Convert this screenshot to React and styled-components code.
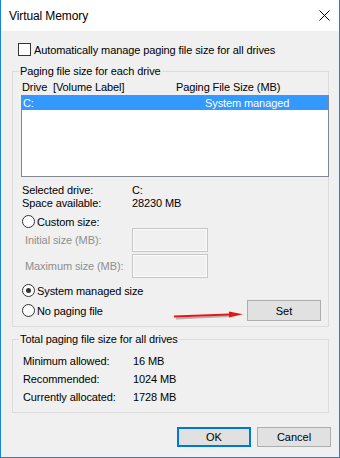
import React from 'react'
import styled, { createGlobalStyle } from 'styled-components'

const GlobalStyle = createGlobalStyle`
    body {
        margin: 0;
        background: #ffffff;
        font-family: 'Liberation Sans', Arial, sans-serif;
        font-size: 11px;
        letter-spacing: -0.1px;
        color: #000;
        white-space: nowrap;
    }
`

const Window = styled.div`
    width: 340px;
    height: 458px;
    box-sizing: border-box;
    border: 1px solid #1883d7;
    border-top: none;
    background: #f0f0f0;
    display: flex;
    flex-direction: column;
`

const TitleBar = styled.div`
    height: 31px;
    background: #ffffff;
    display: flex;
    align-items: center;
    justify-content: space-between;
    padding: 0 9px 0 8px;
    font-size: 12px;
`

const CheckRow = styled.label`
    display: flex;
    align-items: center;
    gap: 3px;
    height: 13px;
    margin-top: 12px;
    padding-left: 17px;
`

const CheckBox = styled.span`
    width: 13px;
    height: 13px;
    box-sizing: border-box;
    border: 1px solid #333;
    background: #fff;
`

const Group = styled.fieldset`
    margin: ${(p) => p.$top}px 10px 0 11px;
    padding: 0 0 ${(p) => p.$bottom}px;
    border: 1px solid #dcdcdc;
    min-width: 0;
    position: relative;
`

const Legend = styled.legend`
    margin-left: 6px;
    padding: 0 1px;
    line-height: 16px;
`

const ColumnHeader = styled.div`
    display: grid;
    grid-template-columns: 31px 123px auto;
    height: 16px;
    align-items: center;
    padding-left: 9px;
`

const ListBox = styled.div`
    margin-left: 8px;
    width: 308px;
    height: 82px;
    box-sizing: border-box;
    border: 1px solid #828790;
    background: #fff;
`

const ListRow = styled.div`
    display: grid;
    grid-template-columns: 182px auto;
    height: 14px;
    align-items: center;
    padding-left: 1px;
    background: ${(p) => (p.$selected ? '#3399ff' : 'transparent')};
    color: ${(p) => (p.$selected ? '#fff' : '#000')};
`

const InfoList = styled.div`
    margin-top: ${(p) => p.$top}px;
    padding-left: ${(p) => p.$left}px;
`

const InfoRow = styled.div`
    display: grid;
    grid-template-columns: ${(p) => p.$col}px auto;
    height: ${(p) => p.$h}px;
    align-items: center;
`

const RadioRow = styled.label`
    display: flex;
    align-items: center;
    gap: 2px;
    height: ${(p) => p.$h || 14}px;
    margin-top: ${(p) => p.$top || 0}px;
    padding-left: 9px;
`

const Radio = styled.span`
    width: 13px;
    height: 13px;
    box-sizing: border-box;
    border: 1px solid #333;
    border-radius: 50%;
    background: #fff;
    display: flex;
    align-items: center;
    justify-content: center;
    &::after {
        content: '';
        width: 5px;
        height: 5px;
        border-radius: 50%;
        background: ${(p) => (p.$checked ? '#333' : 'transparent')};
    }
`

const SizeRow = styled.div`
    display: grid;
    grid-template-columns: 107px 76px;
    height: 24px;
    align-items: center;
    padding-left: 12px;
    margin-top: ${(p) => p.$top || 0}px;
    color: #8e8e8e;
`

const SizeInput = styled.div`
    height: 24px;
    box-sizing: border-box;
    border: 1px solid #c6c6c6;
    box-shadow: inset 0 0 0 1px #fbfbfb;
    background: #f0f0f0;
`

const ActionRow = styled.div`
    display: flex;
    align-items: center;
    justify-content: space-between;
    margin-top: 3px;
    padding-right: 7px;
`

const Button = styled.button`
    width: 74px;
    height: ${(p) => p.$h || 20}px;
    box-sizing: border-box;
    padding: 0;
    border: ${(p) => (p.$default ? '2px solid #0078d7' : '1px solid #adadad')};
    background: #e1e1e1;
    font-family: inherit;
    font-size: 11px;
    color: #000;
`

const Footer = styled.div`
    display: flex;
    justify-content: flex-end;
    gap: 6px;
    margin-top: 14px;
    padding-right: 8px;
`

const Arrow = styled.svg`
    position: absolute;
    left: 146px;
    top: 229px;
`

const CloseIcon = () => (
    <svg width="11" height="11" viewBox="0 0 11 11">
        <path d="M0.5 0.5 L10.5 10.5 M10.5 0.5 L0.5 10.5" stroke="#000" strokeWidth="1" />
    </svg>
)

const App = () => {
    return (
        <>
            <GlobalStyle />
            <Window>
                <TitleBar>
                    <span>Virtual Memory</span>
                    <CloseIcon />
                </TitleBar>

                <CheckRow>
                    <CheckBox />
                    Automatically manage paging file size for all drives
                </CheckRow>

                <Group $top={7} $bottom={5}>
                    <Legend>Paging file size for each drive</Legend>
                    <ColumnHeader>
                        <span>Drive</span>
                        <span>[Volume Label]</span>
                        <span>Paging File Size (MB)</span>
                    </ColumnHeader>
                    <ListBox>
                        <ListRow $selected>
                            <span>C:</span>
                            <span>System managed</span>
                        </ListRow>
                    </ListBox>

                    <InfoList $top={6} $left={9}>
                        <InfoRow $col={110} $h={13}>
                            <span>Selected drive:</span>
                            <span>C:</span>
                        </InfoRow>
                        <InfoRow $col={110} $h={13}>
                            <span>Space available:</span>
                            <span>28230 MB</span>
                        </InfoRow>
                    </InfoList>

                    <RadioRow $top={6} $h={13}>
                        <Radio />
                        Custom size:
                    </RadioRow>
                    <SizeRow>
                        <span>Initial size (MB):</span>
                        <SizeInput />
                    </SizeRow>
                    <SizeRow $top={2}>
                        <span>Maximum size (MB):</span>
                        <SizeInput />
                    </SizeRow>

                    <RadioRow $top={6} $h={13}>
                        <Radio $checked />
                        System managed size
                    </RadioRow>
                    <ActionRow>
                        <RadioRow>
                            <Radio />
                            No paging file
                        </RadioRow>
                        <Button $h={21}>Set</Button>
                    </ActionRow>

                    <Arrow width="90" height="16" viewBox="0 0 90 16">
                        <path d="M17 10.5 L72 8" stroke="#7a7a7a" strokeOpacity="0.5" strokeWidth="2" />
                        <path d="M15 8.5 L70 6.5" stroke="#e81515" strokeWidth="2" />
                        <path d="M70 3.5 L84 6.2 L70 9.5 Z" fill="#e81515" />
                    </Arrow>
                </Group>

                <Group $top={4} $bottom={6}>
                    <Legend>Total paging file size for all drives</Legend>
                    <InfoList $top={5} $left={10}>
                        <InfoRow $col={110} $h={18}>
                            <span>Minimum allowed:</span>
                            <span>16 MB</span>
                        </InfoRow>
                        <InfoRow $col={110} $h={18}>
                            <span>Recommended:</span>
                            <span>1024 MB</span>
                        </InfoRow>
                        <InfoRow $col={110} $h={18}>
                            <span>Currently allocated:</span>
                            <span>1728 MB</span>
                        </InfoRow>
                    </InfoList>
                </Group>

                <Footer>
                    <Button $default>OK</Button>
                    <Button>Cancel</Button>
                </Footer>
            </Window>
        </>
    )
}

export default App
